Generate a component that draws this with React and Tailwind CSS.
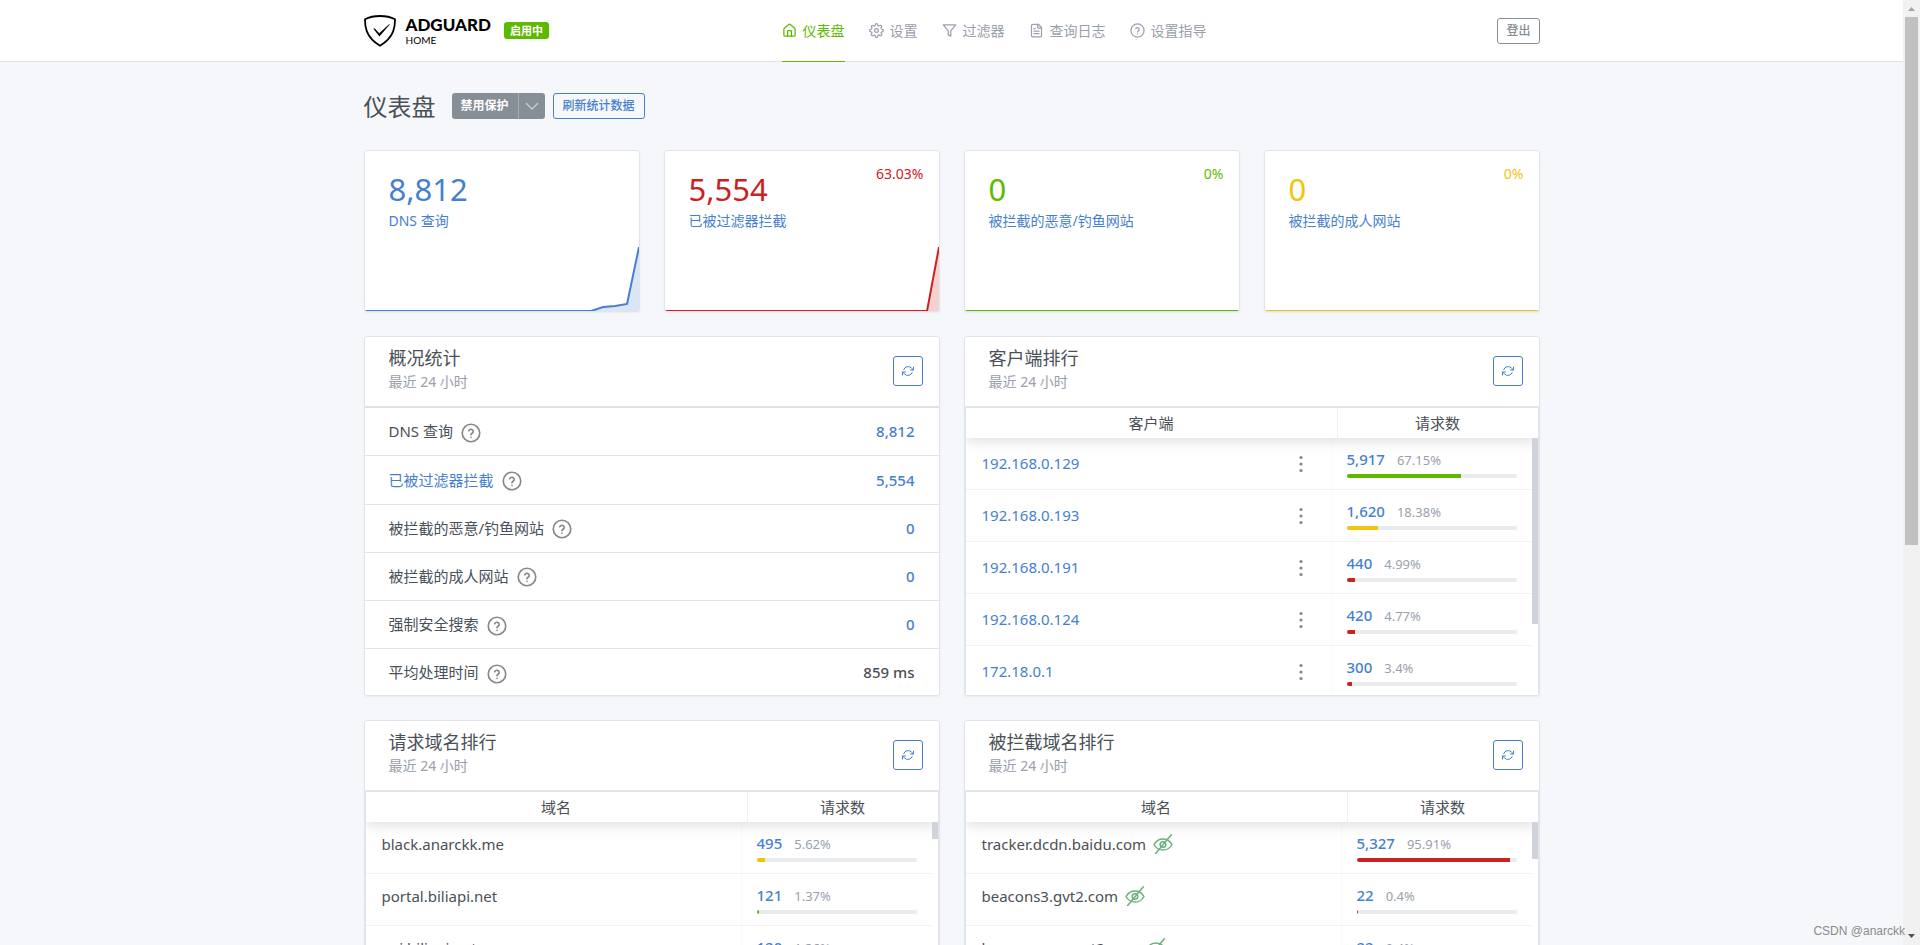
import React from 'react';
import { FileText, Home } from 'lucide-react';
import clsx from 'clsx';

const stats = [
  {
    value: '8,812',
    label: 'DNS 查询',
    text: 'text-[#467fcf]',
    color: '#467fcf',
    line: '0,64 227,64 239,60 251,59 263,57 275,0',
  },
  {
    value: '5,554',
    label: '已被过滤器拦截',
    percent: '63.03%',
    text: 'text-[#cd201f]',
    color: '#cd201f',
    line: '0,64 263,64 275,0',
  },
  {
    value: '0',
    label: '被拦截的恶意/钓鱼网站',
    percent: '0%',
    text: 'text-[#5eba00]',
    color: '#5eba00',
    line: '0,64 275,64',
  },
  {
    value: '0',
    label: '被拦截的成人网站',
    percent: '0%',
    text: 'text-[#f1c40f]',
    color: '#f1c40f',
    line: '0,64 275,64',
  },
];

const overview = [
  { label: 'DNS 查询', value: '8,812' },
  { label: '已被过滤器拦截', value: '5,554', link: true },
  { label: '被拦截的恶意/钓鱼网站', value: '0' },
  { label: '被拦截的成人网站', value: '0' },
  { label: '强制安全搜索', value: '0' },
  { label: '平均处理时间', value: '859 ms', plain: true },
];

const clients = [
  { name: '192.168.0.129', count: '5,917', percent: 67.15, bar: 'bg-[#5eba00]' },
  { name: '192.168.0.193', count: '1,620', percent: 18.38, bar: 'bg-[#f1c40f]' },
  { name: '192.168.0.191', count: '440', percent: 4.99, bar: 'bg-[#cd201f]' },
  { name: '192.168.0.124', count: '420', percent: 4.77, bar: 'bg-[#cd201f]' },
  { name: '172.18.0.1', count: '300', percent: 3.4, bar: 'bg-[#cd201f]' },
];

const queried = [
  { name: 'black.anarckk.me', count: '495', percent: 5.62, bar: 'bg-[#f1c40f]' },
  { name: 'portal.biliapi.net', count: '121', percent: 1.37, bar: 'bg-[#5eba00]' },
  { name: 'api.biliapi.net', count: '120', percent: 1.36, bar: 'bg-[#5eba00]' },
];

const blocked = [
  { name: 'tracker.dcdn.baidu.com', count: '5,327', percent: 95.91, bar: 'bg-[#cd201f]' },
  { name: 'beacons3.gvt2.com', count: '22', percent: 0.4, bar: 'bg-[#cd201f]' },
  { name: 'beacons.gcp.gvt2.com', count: '22', percent: 0.4, bar: 'bg-[#cd201f]' },
];

const cardClass = 'rounded-[3px] border border-[#e0e5ec] bg-white shadow-[0_1px_2px_0_rgba(0,0,0,0.05)]';

const ShieldLogo = () => (
  <svg viewBox="0 0 32 32" className="h-8 w-8" fill="none">
    <path d="M16 1C11 1 5.4 2 1 4.3c0 5-.6 17.2 15 26.5C31.6 21.5 31 9.3 31 4.3 26.6 2 21 1 16 1Z" stroke="#000" strokeWidth="1.8" />
    <path d="M9.2 13.6c1.3-.4 2.1.2 2.8 1.1l3.2 3.6 9.6-8.8c.6-.5 1.2-.3 1.2-.3L15.4 21.6Z" fill="#000" />
  </svg>
);

const GearIcon = () => (
  <svg viewBox="0 0 24 24" className="h-[15px] w-[15px]" fill="none" stroke="currentColor" strokeWidth="2" strokeLinecap="round" strokeLinejoin="round">
    <circle cx="12" cy="12" r="3" />
    <path d="M19.4 15a1.65 1.65 0 0 0 .33 1.82l.06.06a2 2 0 0 1 0 2.83 2 2 0 0 1-2.83 0l-.06-.06a1.65 1.65 0 0 0-1.82-.33 1.65 1.65 0 0 0-1 1.51V21a2 2 0 0 1-2 2 2 2 0 0 1-2-2v-.09A1.65 1.65 0 0 0 9 19.4a1.65 1.65 0 0 0-1.82.33l-.06.06a2 2 0 0 1-2.83 0 2 2 0 0 1 0-2.83l.06-.06a1.65 1.65 0 0 0 .33-1.82 1.65 1.65 0 0 0-1.51-1H3a2 2 0 0 1-2-2 2 2 0 0 1 2-2h.09A1.65 1.65 0 0 0 4.6 9a1.65 1.65 0 0 0-.33-1.82l-.06-.06a2 2 0 0 1 0-2.83 2 2 0 0 1 2.83 0l.06.06a1.65 1.65 0 0 0 1.82.33H9a1.65 1.65 0 0 0 1-1.51V3a2 2 0 0 1 2-2 2 2 0 0 1 2 2v.09a1.65 1.65 0 0 0 1 1.51 1.65 1.65 0 0 0 1.82-.33l.06-.06a2 2 0 0 1 2.83 0 2 2 0 0 1 0 2.83l-.06.06a1.65 1.65 0 0 0-.33 1.82V9a1.65 1.65 0 0 0 1.51 1H21a2 2 0 0 1 2 2 2 2 0 0 1-2 2h-.09a1.65 1.65 0 0 0-1.51 1z" />
  </svg>
);

const FilterIcon = () => (
  <svg viewBox="0 0 24 24" className="h-[15px] w-[15px]" fill="none" stroke="currentColor" strokeWidth="2" strokeLinecap="round" strokeLinejoin="round">
    <path d="M22 3H2l8 9.46V19l4 2v-8.54L22 3z" />
  </svg>
);

const RefreshIcon = () => (
  <svg viewBox="0 0 24 24" className="h-3 w-3" fill="none" stroke="currentColor" strokeWidth="2" strokeLinecap="round" strokeLinejoin="round">
    <path d="M23 4v6h-6M1 20v-6h6" />
    <path d="M3.51 9a9 9 0 0 1 14.85-3.36L23 10M1 14l4.64 4.36A9 9 0 0 0 20.49 15" />
  </svg>
);

const HelpIcon = ({ className }) => (
  <svg viewBox="0 0 24 24" className={className} fill="none" stroke="currentColor" strokeWidth="2" strokeLinecap="round" strokeLinejoin="round">
    <circle cx="12" cy="12" r="10.5" />
    <path d="M9.3 9.3a2.8 2.8 0 0 1 5.4.9c0 1.9-2.7 2.3-2.7 4M12 17.3v.1" />
  </svg>
);

const EyeOffIcon = () => (
  <svg viewBox="0 0 20 20" className="mt-px h-5 w-5" fill="none" stroke="#67b279" strokeWidth="1.5" strokeLinecap="round" strokeLinejoin="round">
    <path d="M1 10.5C3 7 6.2 4.9 10 4.9S17 7 19 10.5C17 14 13.8 16.1 10 16.1S3 14 1 10.5Z" />
    <circle cx="10" cy="10.5" r="2.8" />
    <path d="M2.7 19.5 18.3.8" />
  </svg>
);

const nav = [
  { label: '仪表盘', icon: <Home className="h-[15px] w-[15px]" />, active: true },
  { label: '设置', icon: <GearIcon /> },
  { label: '过滤器', icon: <FilterIcon /> },
  { label: '查询日志', icon: <FileText className="h-[15px] w-[15px]" /> },
  { label: '设置指导', icon: <HelpIcon className="h-[15px] w-[15px]" /> },
];

const Header = () => (
  <header className="border-b border-[#dee2e6] bg-white">
    <div className="mx-auto flex h-[61px] max-w-[1200px] items-center px-3">
      <div className="flex w-[418px] shrink-0 items-center">
        <a href="#home" className="flex items-center gap-[10px] text-black">
          <ShieldLogo />
          <span className="flex flex-col pt-px font-['Lato']">
            <span className="text-[17px] leading-[18px] font-black">ADGUARD</span>
            <span className="text-[10px] leading-3">HOME</span>
          </span>
        </a>
        <span className="ml-[13px] rounded-[3px] bg-[#5eba00] px-[6px] text-[11px] leading-[17px] font-bold text-white">启用中</span>
      </div>
      <nav className="flex gap-6 self-stretch">
        {nav.map((item) => (
          <a
            key={item.label}
            href="#nav"
            className={clsx(
              '-mb-px flex items-center gap-[6px] border-b text-sm',
              item.active ? 'border-[#5eba00] text-[#5eba00]' : 'border-transparent text-[#9aa0ac]'
            )}
          >
            {item.icon}
            {item.label}
          </a>
        ))}
      </nav>
      <button className="ml-auto h-[26px] rounded-[3px] border border-[#868e96] px-2 text-xs font-medium text-[#868e96]">登出</button>
    </div>
  </header>
);

const StatCard = ({ item }) => (
  <div className={clsx(cardClass, 'flex h-[162px] flex-col overflow-hidden')}>
    <div className="flex justify-between pt-3 pr-[15px] pl-6">
      <div>
        <div className={clsx('pt-[7px] pb-px text-[31px] leading-[38px]', item.text)}>{item.value}</div>
        <a href="#stat" className="block text-sm leading-6 text-[#467fcf]">{item.label}</a>
      </div>
      <div className={clsx('text-sm leading-[22px]', item.text)}>{item.percent}</div>
    </div>
    <svg viewBox="0 0 275 64" preserveAspectRatio="none" className="mt-auto h-16 w-full shrink-0" fill="none">
      <polygon points={`${item.line} 275,64 0,64`} fill={item.color} fillOpacity="0.2" />
      <polyline points={item.line} stroke={item.color} strokeWidth="2" />
    </svg>
  </div>
);

const Panel = ({ title, children }) => (
  <section className={clsx(cardClass, 'h-[360px] overflow-hidden')}>
    <div className="flex h-[69px] items-start justify-between pr-4 pl-6">
      <div className="pt-[9px]">
        <h2 className="text-lg leading-6 text-[#495057]">{title}</h2>
        <div className="text-sm leading-6 text-[#9aa0ac]">最近 24 小时</div>
      </div>
      <button aria-label="刷新" className="mt-[19px] flex h-[30px] w-[30px] items-center justify-center rounded-[3px] border border-[#467fcf] text-[#467fcf]">
        <RefreshIcon />
      </button>
    </div>
    {children}
  </section>
);

const OverviewTable = () => (
  <div className="border-t border-[#dee2e6]">
    <table className="h-[289px] w-full text-[15px]">
      <tbody>
        {overview.map((row) => (
          <tr key={row.label} className="border-t border-[#dee2e6]">
            <td className="pl-6">
              <div className="flex items-center gap-2">
                {row.link ? <a href="#filtered" className="text-[#467fcf]">{row.label}</a> : <span>{row.label}</span>}
                <HelpIcon className="mt-[2px] h-5 w-5 text-[#888888]" />
              </div>
            </td>
            <td className={clsx('pr-6 text-right font-medium', !row.plain && 'text-[#467fcf]')}>{row.value}</td>
          </tr>
        ))}
      </tbody>
    </table>
  </div>
);

const Count = ({ row }) => (
  <div>
    <div className="flex items-baseline gap-3 leading-5">
      <a href="#log" className="font-medium text-[#467fcf]">{row.count}</a>
      <span className="text-[13px] text-[#9aa0ac]">{row.percent}%</span>
    </div>
    <div className="mt-1 h-1 overflow-hidden rounded-[3px] bg-[#e9ecef]">
      <div className={clsx('h-full', row.bar)} style={{ width: `${row.percent}%` }} />
    </div>
  </div>
);

const RankTable = ({ heading, rows, type, headWidth, cellWidth, thumb }) => (
  <div className="relative h-[290px] overflow-hidden border border-t-2 border-[#e1e4e9]">
    <table className="flex flex-col text-[15px]">
      <thead className="relative shadow-[0_2px_15px_0_rgba(0,0,0,0.15)]">
        <tr className="flex h-[30px] bg-white">
          <th className="flex-1 border-r border-[#f0f0f0] leading-[30px] font-normal">{heading}</th>
          <th className={clsx('leading-[30px] font-normal', headWidth)}>请求数</th>
        </tr>
      </thead>
      <tbody>
        {rows.map((row) => (
          <tr key={row.name} className="mr-[6px] flex h-[52px] border-b border-[#f2f2f2]">
            <td className={clsx('flex flex-1 border-r border-[#fafafa] pr-[18px] pl-4', type === 'client' ? 'items-center justify-between' : 'gap-[7px] pt-[11px]')}>
              {type === 'client' ? (
                <a href="#client" className="text-[#467fcf]">{row.name}</a>
              ) : (
                <span className="leading-[22px]">{row.name}</span>
              )}
              {type === 'client' && (
                <button aria-label={row.name} className="text-[#888888]">
                  <svg viewBox="0 0 24 24" className="h-6 w-6" fill="currentColor">
                    <circle cx="12" cy="5.5" r="1.6" />
                    <circle cx="12" cy="12" r="1.6" />
                    <circle cx="12" cy="18.5" r="1.6" />
                  </svg>
                </button>
              )}
              {type === 'blocked' && <EyeOffIcon />}
            </td>
            <td className={clsx('px-[15px] pt-[11px]', cellWidth)}>
              <Count row={row} />
            </td>
          </tr>
        ))}
      </tbody>
    </table>
    <div className={clsx('absolute top-[30px] right-0 w-[6px] bg-[#d0d3d9]', thumb)} />
  </div>
);

const PageScrollbar = () => (
  <div className="flex w-[17px] shrink-0 flex-col items-center justify-between bg-[#f1f1f1]">
    <svg viewBox="0 0 17 17" className="h-[17px] w-[17px] shrink-0">
      <path d="M5 11h7L8.5 7Z" fill="#a3a3a3" />
    </svg>
    <div className="w-[13px] flex-1">
      <div className="h-[58%] bg-[#c1c1c1]" />
    </div>
    <svg viewBox="0 0 17 17" className="h-[17px] w-[17px] shrink-0">
      <path d="M5 6h7L8.5 10Z" fill="#505050" />
    </svg>
  </div>
);

const App = () => {
  return (
    <div lang="zh-CN" className="relative flex h-screen overflow-hidden bg-[#f5f7fb] font-['Noto_Sans','Noto_Sans_CJK_SC',sans-serif] text-[#495057]">
      <div className="min-w-0 flex-1 overflow-hidden">
        <Header />
        <main className="mx-auto max-w-[1200px] px-3">
          <div className="flex h-[88px] items-center">
            <h1 className="pt-[2px] text-2xl leading-9">仪表盘</h1>
            <div className="ml-4 flex h-[26px] overflow-hidden rounded-[3px] bg-[#868e96] text-white">
              <button className="px-[9px] text-xs font-bold">禁用保护</button>
              <button aria-label="更多" className="flex w-[27px] items-center justify-center border-l border-[#a5abb1]">
                <svg viewBox="0 0 14 8" className="h-2 w-[14px]" fill="none" stroke="#c5c9cd" strokeWidth="1.5">
                  <path d="M1 1l6 6 6-6" />
                </svg>
              </button>
            </div>
            <button className="ml-2 h-[26px] rounded-[3px] border border-[#467fcf] px-[9px] text-xs font-medium text-[#467fcf]">刷新统计数据</button>
          </div>
          <div className="grid grid-cols-4 gap-6">
            {stats.map((item) => (
              <StatCard key={item.label} item={item} />
            ))}
          </div>
          <div className="mt-6 grid grid-cols-2 gap-6">
            <Panel title="概况统计">
              <OverviewTable />
            </Panel>
            <Panel title="客户端排行">
              <RankTable heading="客户端" rows={clients} type="client" headWidth="w-[200px]" cellWidth="w-[200px]" thumb="h-[186px]" />
            </Panel>
            <Panel title="请求域名排行">
              <RankTable heading="域名" rows={queried} type="domain" headWidth="w-[190px]" cellWidth="w-[190px]" thumb="h-[17px]" />
            </Panel>
            <Panel title="被拦截域名排行">
              <RankTable heading="域名" rows={blocked} type="blocked" headWidth="w-[190px]" cellWidth="w-[190px]" thumb="h-[37px]" />
            </Panel>
          </div>
        </main>
      </div>
      <PageScrollbar />
      <div className="absolute right-[15px] bottom-[6px] font-['Liberation_Sans'] text-xs leading-4 text-[#8a8a8a]">CSDN @anarckk</div>
    </div>
  );
};

export default App;
